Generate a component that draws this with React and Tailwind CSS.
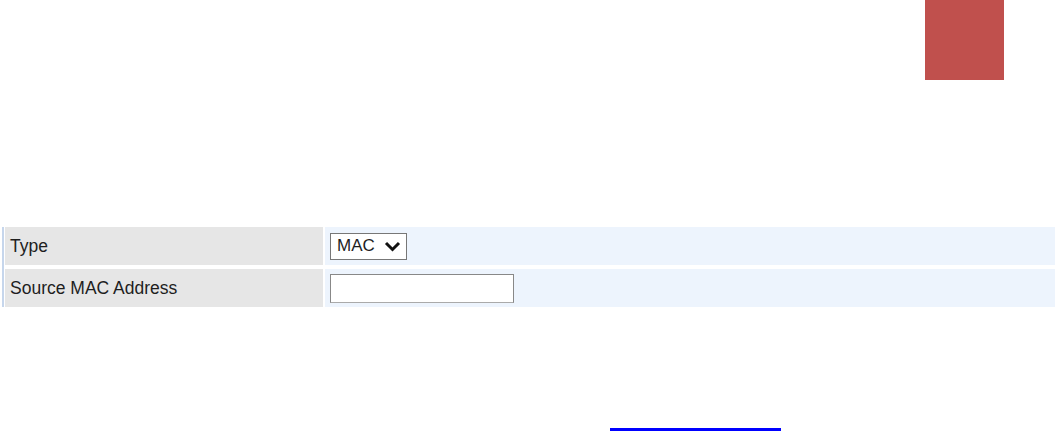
export default function App() {
  return (
    <div className="relative h-[431px] w-[1055px] overflow-hidden bg-white font-['Liberation_Sans',Arial,sans-serif] text-[17.5px] text-[#1e1e1e]">
      <div className="flex justify-end pr-[51px]">
        <div className="h-20 w-[79px] bg-[#c0504d]" />
      </div>

      <div className="mt-[147px] ml-[2px] flex flex-col gap-[4px] border-l-2 border-[#c6d6ec] pl-[1px]">
        <div className="flex h-[38px] gap-[2px]">
          <div className="flex w-[318px] items-center bg-[#e6e6e6] pl-[5px]">Type</div>
          <div className="flex flex-1 items-center bg-[#edf4fd] pl-[5px]">
            <div className="flex h-[27px] w-[77px] items-center gap-[9px] border border-[#777] bg-white pl-[6px] text-[17px]">
              <span>MAC</span>
              <svg width="17" height="11" viewBox="0 0 17 11">
                <path d="M2 2 L8.5 8.5 L15 2" fill="none" stroke="#111" strokeWidth="3" />
              </svg>
            </div>
          </div>
        </div>
        <div className="flex h-[38px] gap-[2px]">
          <div className="flex w-[318px] items-center bg-[#e6e6e6] pl-[5px]">Source MAC Address</div>
          <div className="flex flex-1 items-center bg-[#edf4fd] pl-[5px]">
            <div className="h-[29px] w-[184px] border border-[#888] border-b-[#aaa] bg-white" />
          </div>
        </div>
      </div>

      <div className="mt-[121px] ml-[610px] h-[3px] w-[171px] bg-[#0000ff]" />
    </div>
  );
}
